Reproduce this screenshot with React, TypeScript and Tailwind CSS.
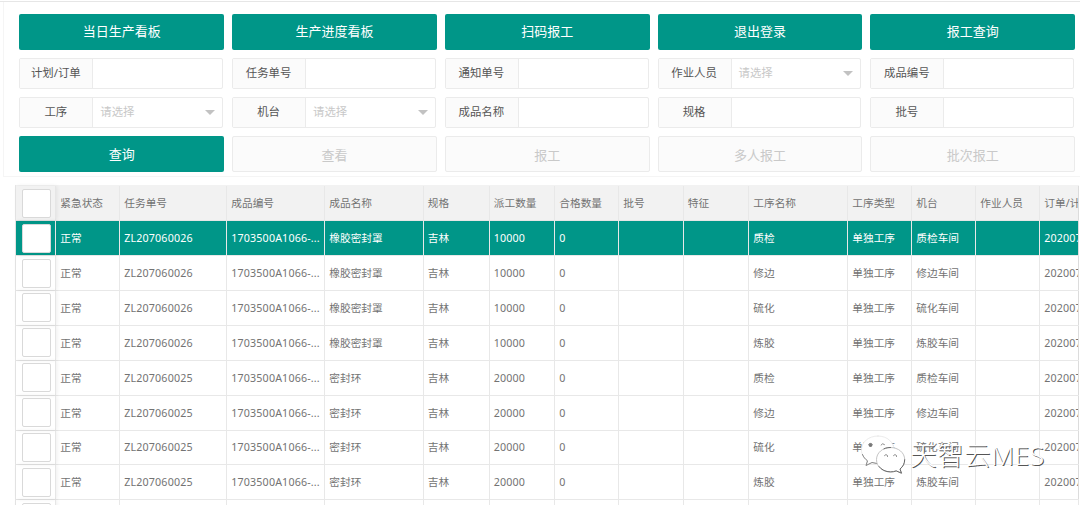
import * as React from "react";
import clsx from "clsx";

interface IField {
  label: string;
  select?: boolean;
}

interface ITask {
  code: string;
  name: string;
  count: string;
  process: string;
  machine: string;
}

const topActions = ["当日生产看板", "生产进度看板", "扫码报工", "退出登录", "报工查询"];
const bottomActions = ["查询", "查看", "报工", "多人报工", "批次报工"];

const fields: IField[] = [
  { label: "计划/订单" },
  { label: "任务单号" },
  { label: "通知单号" },
  { label: "作业人员", select: true },
  { label: "成品编号" },
  { label: "工序", select: true },
  { label: "机台", select: true },
  { label: "成品名称" },
  { label: "规格" },
  { label: "批号" },
];

const headers = [
  "紧急状态",
  "任务单号",
  "成品编号",
  "成品名称",
  "规格",
  "派工数量",
  "合格数量",
  "批号",
  "特征",
  "工序名称",
  "工序类型",
  "机台",
  "作业人员",
  "订单/计",
];

const seal = { code: "ZL207060026", name: "橡胶密封罩", count: "10000" };
const ring = { code: "ZL207060025", name: "密封环", count: "20000" };

const tasks: ITask[] = [
  { ...seal, process: "质检", machine: "质检车间" },
  { ...seal, process: "修边", machine: "修边车间" },
  { ...seal, process: "硫化", machine: "硫化车间" },
  { ...seal, process: "炼胶", machine: "炼胶车间" },
  { ...ring, process: "质检", machine: "质检车间" },
  { ...ring, process: "修边", machine: "修边车间" },
  { ...ring, process: "硫化", machine: "硫化车间" },
  { ...ring, process: "炼胶", machine: "炼胶车间" },
];

const rowGrid =
  "grid grid-cols-[40px_64px_107px_98px_98.5px_66px_65.5px_64px_64.5px_65.5px_99px_64px_64px_64px_38.5px]";

function Button({ label, disabled }: { label: string; disabled?: boolean }) {
  return (
    <button
      type="button"
      disabled={disabled}
      className={clsx(
        "h-9 rounded-[2px] text-[13px]",
        disabled ? "border border-[#ebebeb] bg-[#fbfbfb] pt-[3px] text-[#c9c9c9]" : "bg-[#009688] pt-px text-white",
      )}
    >
      {label}
    </button>
  );
}

function Field({ label, select }: IField) {
  return (
    <div className="mr-px flex h-[31px] rounded-[2px] border border-[#ebebeb] bg-white text-[11.4px]">
      <div className="flex w-[73px] shrink-0 items-center justify-center border-r border-[#ebebeb] bg-[#fbfbfb] pr-px text-[#555]">
        {label}
      </div>
      {select && (
        <div className="flex flex-1 items-center justify-between pr-[7px] pl-[7px] text-[#c8c8c8]">
          <span>请选择</span>
          <svg className="h-[5px] w-[10px]" viewBox="0 0 10 5" fill="#c2c2c2">
            <path d="M0 0h10L5 5z" />
          </svg>
        </div>
      )}
    </div>
  );
}

function Checkbox({ header }: { header?: boolean }) {
  return (
    <div
      className={clsx(
        "relative z-10 flex justify-center border-r border-[#e6e6e6] pl-[2px] shadow-[1px_0_4px_rgba(0,0,0,0.07)]",
        header ? "bg-[#f2f2f2] pt-[3px]" : "pt-[2.6px]",
      )}
    >
      <div className="h-[29px] w-[29px] rounded-[2px] border border-[#d9d9d9] bg-white" />
    </div>
  );
}

function Cell({ children, last, code }: { children?: React.ReactNode; last?: boolean; code?: boolean }) {
  return (
    <div
      className={clsx(
        "flex items-center overflow-hidden border-r border-[#e8e8e8] pl-1 whitespace-nowrap",
        code && "tracking-[0.15px]",
        last && "border-r-[#dcdcdc]",
      )}
    >
      {children}
    </div>
  );
}

function TaskRow({ task, active }: { task: ITask; active: boolean }) {
  return (
    <div
      className={clsx(
        rowGrid,
        "h-[34.93px] border-b border-[#e8e8e8]",
        active ? "bg-[#009688] text-white" : "bg-white text-[#737373]",
      )}
    >
      <Checkbox />
      <Cell>正常</Cell>
      <Cell code>{task.code}</Cell>
      <Cell code>1703500A1066-...</Cell>
      <Cell>{task.name}</Cell>
      <Cell>吉林</Cell>
      <Cell code>{task.count}</Cell>
      <Cell>0</Cell>
      <Cell />
      <Cell />
      <Cell>{task.process}</Cell>
      <Cell>单独工序</Cell>
      <Cell>{task.machine}</Cell>
      <Cell />
      <Cell code last>
        202007
      </Cell>
    </div>
  );
}

function Watermark() {
  return (
    <div className="absolute top-[434px] left-[860px] z-20 flex items-center">
      <svg className="h-[42px] w-[46px]" viewBox="0 0 46 42" fill="none" strokeLinecap="round">
        <path
          d="M18 2C8.500 2 1.500 8 1.500 16c0 4.500 2 8 6 10.800L6 31.500l6-3c2 .7 4 1 6 1 9.500 0 16-6 16-13.500S27.500 2 18 2z"
          fill="#fff"
          stroke="#e2e2e2"
          strokeWidth="0.7"
        />
        <path d="M2.500 20.500c1 2.500 2.600 4.600 5 6.300L6 31.500l6-3 4.500.9" stroke="#858585" />
        <path
          d="M30.500 13.500c-8 0-14 5.300-14 12.200s6 12.200 14 12.200c2 0 4-.3 5.700-1l5.300 2.300-1.500-4.200c3-2.300 4.700-5.500 4.700-9.300 0-6.900-6.200-12.200-14.200-12.200z"
          fill="#fff"
          stroke="#b5b5b5"
          strokeWidth="0.8"
        />
        <path d="M24 14.800c2-1 4.200-1.300 6.500-1.300M19 32.500c2.600 3.400 6.700 5.400 11.500 5.400 2 0 4-.3 5.700-1l5.300 2.300-1.500-4.200c3-2.300 4.700-5.500 4.700-9.300" stroke="#6a6a6a" />
        <circle cx="10.500" cy="11" r="1.900" fill="#777" />
        <g stroke="#8a8a8a">
          <path d="M8.500 10.500q2-2.500 4 0M21 11q1.500-2.500 3.500-.5" />
          <path d="M24.500 21.500q1.500-2 3 0v1M33.500 21.500q1.500-2 3 0v1" />
        </g>
      </svg>
      <span className="ml-[4px] text-[26.5px] leading-[42px] font-light tracking-[0.5px] whitespace-nowrap text-white [text-shadow:1px_1px_0.5px_#555]">
        天智云MES
      </span>
    </div>
  );
}

export default function App() {
  return (
    <div className="relative h-[505px] w-[1080px] overflow-hidden bg-white font-['Noto_Sans','Noto_Sans_CJK_SC',sans-serif]">
      <div className="h-0.5 border-b border-[#e6e6e6]" />
      <div className="ml-[3px] h-[175px] border-b border-l border-[#f5f5f5] pt-[11.5px] pr-[4.9px] pl-[15.3px]">
        <div className="grid grid-cols-5 gap-x-2">
          {topActions.map((label) => (
            <Button key={label} label={label} />
          ))}
        </div>
        <div className="mt-2 grid grid-cols-5 gap-2">
          {fields.map((field) => (
            <Field key={field.label} {...field} />
          ))}
        </div>
        <div className="mt-[8.5px] grid grid-cols-5 gap-x-2">
          {bottomActions.map((label, i) => (
            <Button key={label} label={label} disabled={i > 0} />
          ))}
        </div>
      </div>

      <div className="mt-2 ml-[15.3px] w-[1064px] border-l border-[#e6e6e6] text-[10.7px]">
        <div className={clsx(rowGrid, "h-9 border-b border-[#e6e6e6] bg-[#f2f2f2] pt-px text-[#737373]")}>
          <Checkbox header />
          {headers.map((header, i) => (
            <Cell key={header} last={i === headers.length - 1}>
              {header}
            </Cell>
          ))}
        </div>
        {tasks.map((task, i) => (
          <TaskRow key={i} task={task} active={i === 0} />
        ))}
        <div className={clsx(rowGrid, "h-[34.93px]")}>
          <Checkbox />
          {headers.map((header) => (
            <Cell key={header} />
          ))}
        </div>
      </div>
      <Watermark />
    </div>
  );
}
